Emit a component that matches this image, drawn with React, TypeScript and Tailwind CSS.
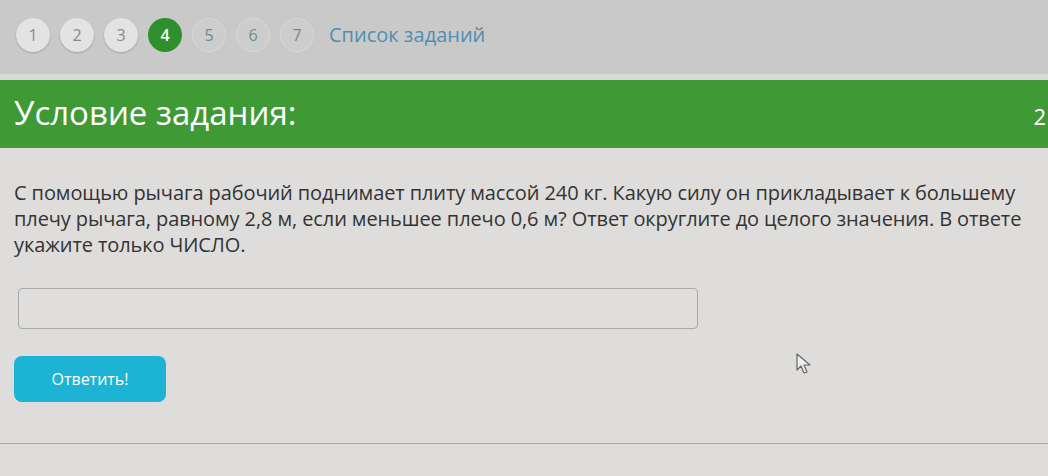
import React from 'react';

const steps = [1, 2, 3, 4, 5, 6, 7];

export default function App() {
  const active = 4;
  const done = [1, 2, 3];

  return (
    <div className="relative w-[1048px] h-[476px] overflow-hidden bg-[#dedddb] font-['Open_Sans',sans-serif]">
      {/* Tasks navigation */}
      <div className="h-[74px] bg-[#c9c9c9] flex items-center pl-[16px] gap-[10px] pb-[4px]">
        {steps.map((n) => (
          <div
            key={n}
            className={`w-[34px] h-[34px] rounded-full flex items-center justify-center text-[16px] ${
              n === active
                ? 'bg-[#2f8f2e] text-white font-semibold'
                : done.includes(n)
                ? 'bg-[#e3e3e3] text-[#8a8a8a] shadow-[0_1px_2px_rgba(0,0,0,0.2)]'
                : 'bg-[#cdcdcd] text-[#6f8a90] border border-[#d9d9d9]'
            }`}
          >
            {n}
          </div>
        ))}
        <span className="ml-[5px] text-[20px] text-[#4f8fb0]">Список заданий</span>
      </div>
      <div className="h-[6px] bg-[#d8d8d8]" />

      {/* Header */}
      <div className="h-[68px] bg-[#3f9a35] flex items-center justify-between pl-[14px] pr-[2px]">
        <h1 className="text-[33px] text-white leading-none pb-[4px]">Условие задания:</h1>
        <span className="text-[22px] text-white mt-[4px]">2</span>
      </div>

      {/* Body */}
      <div className="px-[14px] pt-[32px]">
        <p className="text-[20px] leading-[26px] text-[#333333] whitespace-nowrap tracking-[-0.1px]">
          С помощью рычага рабочий поднимает плиту массой 240 кг. Какую силу он прикладывает к большему
          <br />
          плечу рычага, равному 2,8 м, если меньшее плечо 0,6 м? Ответ округлите до целого значения. В ответе
          <br />
          укажите только ЧИСЛО.
        </p>

        <input
          type="text"
          className="mt-[30px] ml-[4px] block w-[680px] h-[41px] rounded-[4px] border border-[#a9a9a9] bg-[#dfdedc] outline-none"
        />

        <button className="mt-[27px] w-[152px] h-[46px] rounded-[8px] bg-[#1cb3d4] text-white text-[16px]">
          Ответить!
        </button>
      </div>

      {/* Footer divider */}
      <div className="absolute left-0 right-0 top-[443px] h-[1px] bg-[#a8a8a8]" />

      {/* Mouse pointer */}
      <svg className="absolute left-[796px] top-[353px]" width="16" height="22" viewBox="0 0 16 22">
        <path
          d="M1 1 L1 17 L5 13 L8 20 L11 19 L8 12 L14 12 Z"
          fill="#eeeeee"
          stroke="#666666"
          strokeWidth="1.2"
          strokeLinejoin="round"
        />
      </svg>
    </div>
  );
}
